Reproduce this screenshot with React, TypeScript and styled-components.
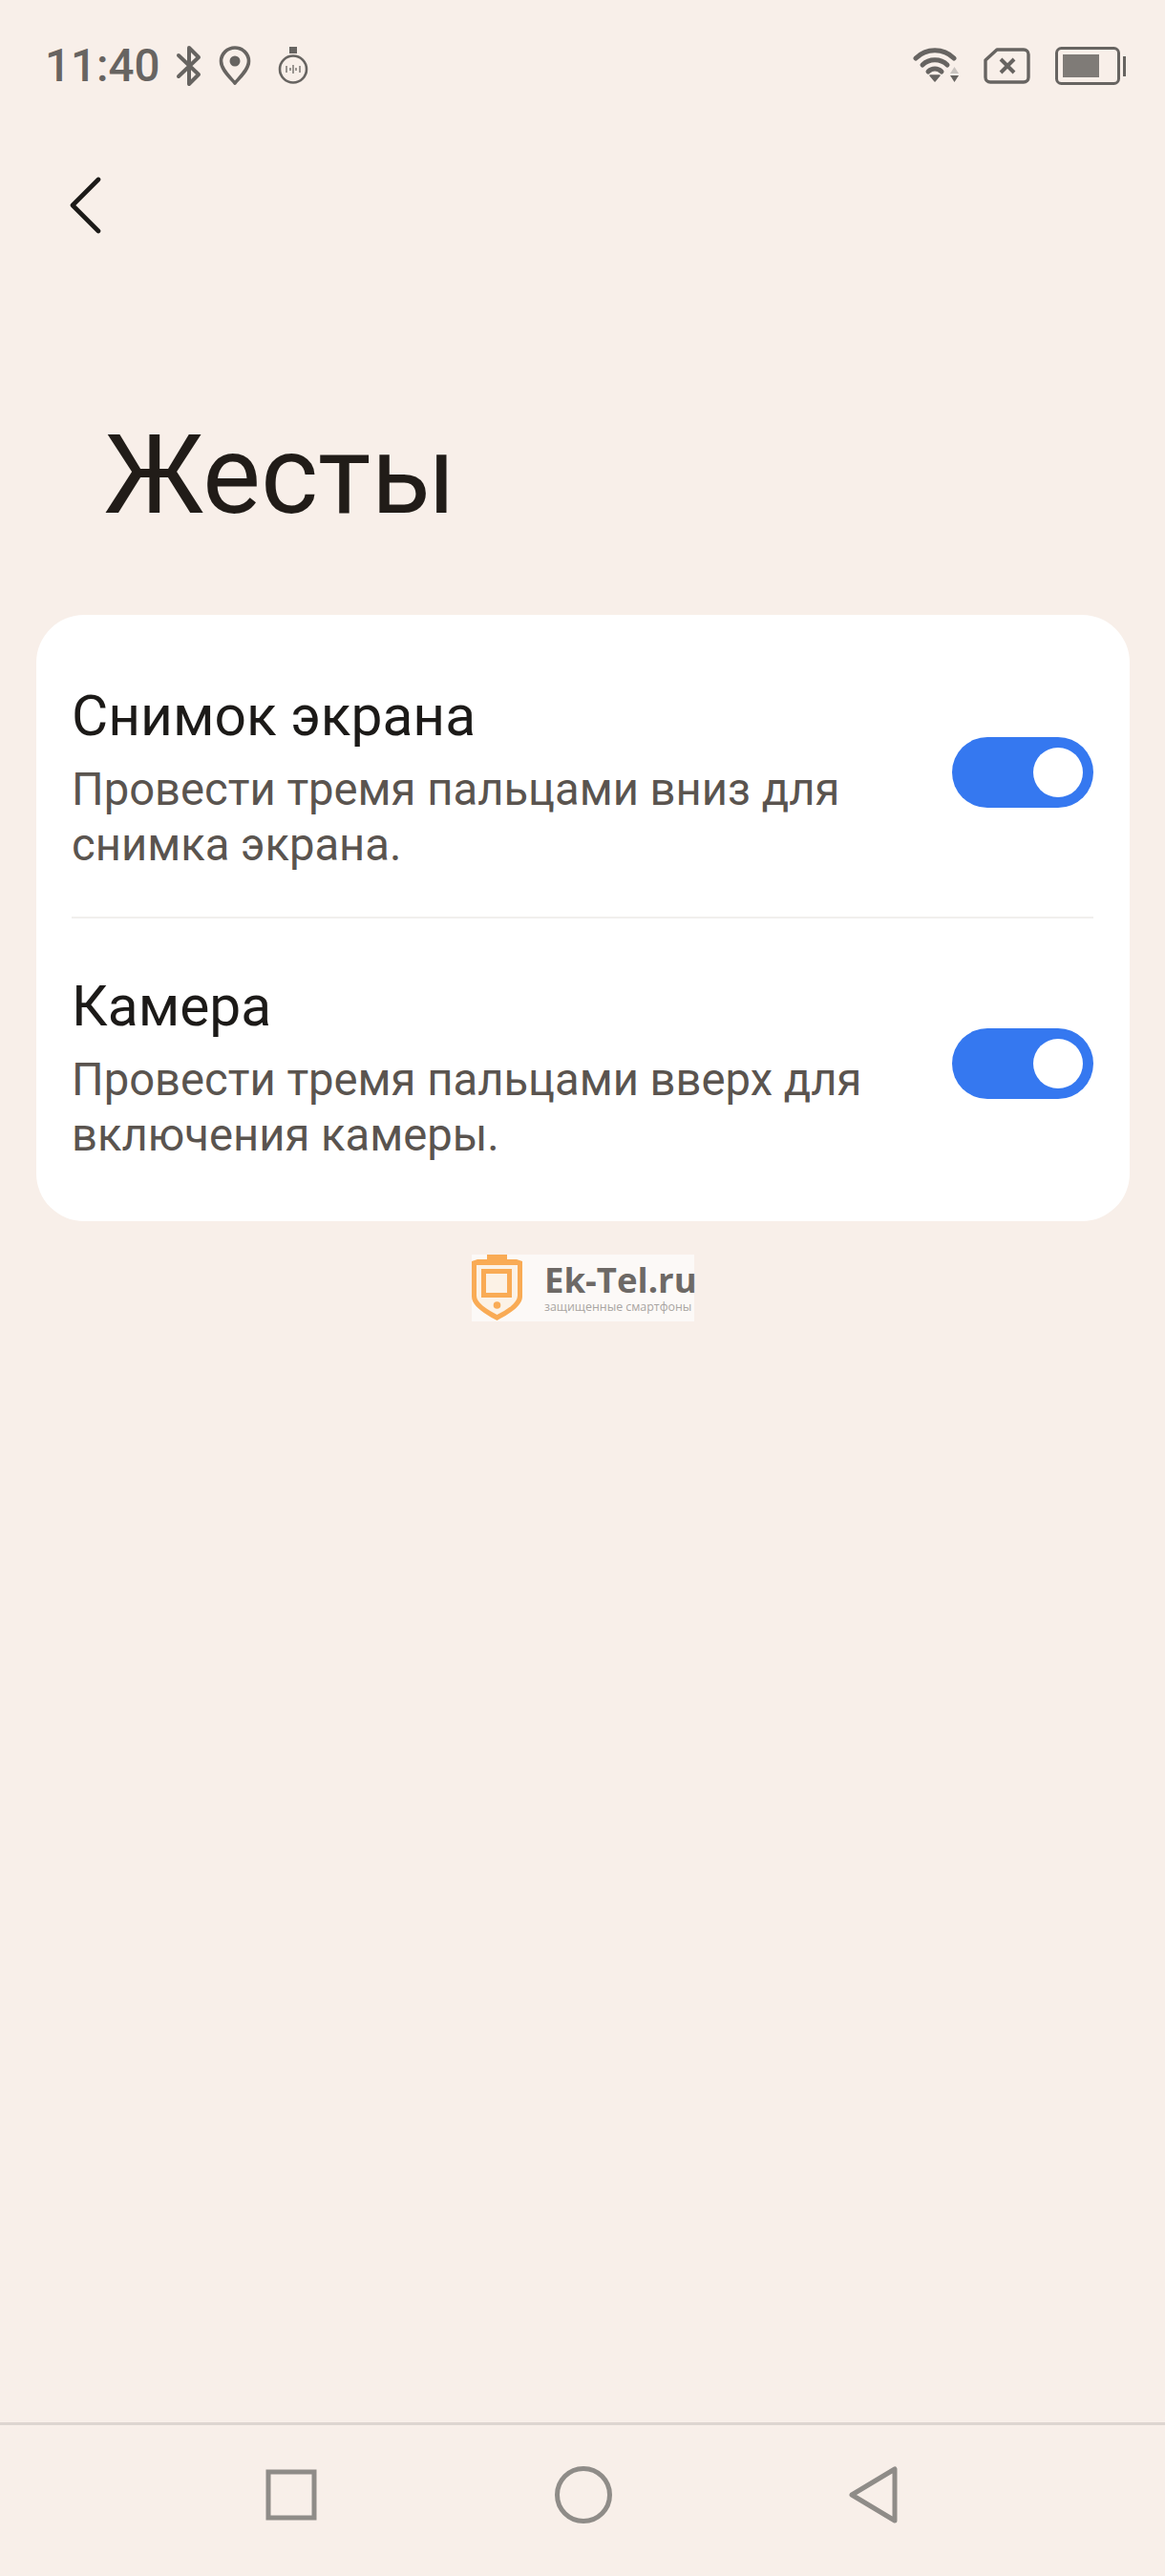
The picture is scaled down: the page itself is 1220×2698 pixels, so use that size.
import React from "react";
import styled, { createGlobalStyle } from "styled-components";

const Global = createGlobalStyle`
  html, body { margin: 0; padding: 0; background: #f8efe9; }
  body { font-family: Roboto, "Noto Sans", sans-serif; }
`;

const Page = styled.div`
  width: 1220px;
  height: 2698px;
  background: #f8efe9;
  display: flex;
  flex-direction: column;
  overflow: hidden;
`;

const StatusBar = styled.header`
  height: 46px;
  margin-top: 46px;
  display: flex;
  align-items: center;
  justify-content: space-between;
  padding: 0 41px 0 47px;
`;

const StatusGroup = styled.div`
  display: flex;
  align-items: center;
`;

const Time = styled.span`
  font-size: 47.500px;
  font-weight: 500;
  line-height: 46px;
  color: #676461;
  margin-right: 16px;
`;

const StatusIcon = styled.svg<{ $gap?: number }>`
  display: block;
  flex: none;
  margin-right: ${(p) => p.$gap ?? 0}px;
  color: #676461;
`;

const BackRow = styled.div`
  margin-top: 93px;
  padding-left: 72px;
  height: 60px;
`;

const Title = styled.h1`
  margin: 187px 0 0;
  padding-left: 109px;
  font-size: 115px;
  line-height: 132px;
  font-weight: 400;
  color: #211c18;
`;

const Card = styled.section`
  margin: 80px 37px 0 38px;
  height: 635px;
  background: #fff;
  border-radius: 50px;
  padding: 0 38px 0 37px;
  display: flex;
  flex-direction: column;
`;

const Row = styled.div`
  height: 304px;
  padding-top: 9px;
  display: flex;
  align-items: center;
  justify-content: space-between;
  box-sizing: border-box;
  &:first-child {
    height: 318px;
    padding-top: 25px;
    border-bottom: 2px solid #f1efed;
  }
`;

const RowText = styled.div`
  width: 880px;
`;

const RowTitle = styled.div`
  font-size: 58.700px;
  line-height: 68px;
  color: #1c1a18;
`;

const RowDesc = styled.div`
  margin-top: 14px;
  font-size: 47.200px;
  line-height: 58px;
  color: #5a544f;
`;

const Switch = styled.div<{ $raise: number }>`
  width: 148px;
  height: 74px;
  flex: none;
  margin-top: ${(p) => -p.$raise}px;
  border-radius: 37px;
  background: #3578f0;
  display: flex;
  align-items: center;
  justify-content: flex-end;
  padding-right: 11px;
  box-sizing: border-box;
`;

const Knob = styled.div`
  width: 52px;
  height: 52px;
  border-radius: 50%;
  background: #fff;
`;

const Logo = styled.div`
  align-self: flex-start;
  margin: 35px 0 0 494px;
  width: 233px;
  height: 70px;
  background: #fcf9f7;
  display: flex;
`;

const LogoMark = styled.svg`
  display: block;
  flex: none;
`;

const LogoText = styled.div`
  margin-left: 22px;
  display: flex;
  flex-direction: column;
  white-space: nowrap;
`;

const LogoName = styled.div`
  font-family: "Open Sans", sans-serif;
  font-weight: 700;
  font-size: 36.500px;
  line-height: 40px;
  margin-top: 6px;
  color: #6d6966;
`;

const LogoSub = styled.div`
  font-family: "Open Sans", sans-serif;
  font-size: 12.400px;
  line-height: 14px;
  margin-top: 2px;
  color: #a9a5a2;
`;

const Spacer = styled.div`
  flex: 1;
`;

const NavBar = styled.nav`
  height: 161px;
  flex: none;
  box-sizing: border-box;
  border-top: 3px solid #ddd5d0;
  display: flex;
  align-items: center;
  justify-content: space-between;
  padding: 0 279px 0 278px;
`;

const NavIcon = styled.svg`
  display: block;
  color: #8f8c88;
  margin-top: -12px;
`;

export default function App() {
  return (
    <Page>
      <Global />
      <StatusBar>
        <StatusGroup>
          <Time>11:40</Time>
          <StatusIcon $gap={17} width="28" height="44" viewBox="0 0 28 44" fill="none" stroke="currentColor" strokeWidth="4" strokeLinejoin="round" strokeLinecap="round">
            <path d="M3 11 L24 31 L14 41 V3 L24 13 L3 33" />
          </StatusIcon>
          <StatusIcon $gap={28} width="34" height="42" viewBox="0 0 34 42" fill="none">
            <path d="M17 39 C12 33 2.500 25 2.500 16 A14.500 14 0 0 1 31.500 16 C31.500 25 22 33 17 39 Z" stroke="currentColor" strokeWidth="3.600" strokeLinejoin="round" />
            <circle cx="17" cy="16" r="5.500" fill="currentColor" />
          </StatusIcon>
          <StatusIcon width="32" height="40" viewBox="0 0 32 40" fill="none">
            <rect x="12" y="0" width="8" height="7" fill="currentColor" />
            <circle cx="16" cy="23.500" r="14" stroke="currentColor" strokeWidth="2.600" />
            <path d="M9 20 V27 M13 22 V25 M16 19 V28 M19 22 V25 M23 20 V27" stroke="currentColor" strokeWidth="1.300" />
          </StatusIcon>
        </StatusGroup>
        <StatusGroup>
          <StatusIcon $gap={22} width="52" height="38" viewBox="0 0 52 38" fill="none">
            <path d="M3 11 C14 0 32 0 43 11" stroke="currentColor" strokeWidth="5" strokeLinecap="round" />
            <path d="M10 18 C17 11 29 11 36 18" stroke="currentColor" strokeWidth="5" strokeLinecap="round" />
            <path d="M16 25 C20 21 26 21 30 25" stroke="currentColor" strokeWidth="5" strokeLinecap="round" />
            <path d="M18 29 H28 L23 35 Z" fill="currentColor" stroke="currentColor" strokeWidth="1.500" strokeLinejoin="round" />
            <path d="M39 27 L43.500 20 L48 27 Z" fill="#c9c4c0" />
            <path d="M39 29 H48 L43.500 36 Z" fill="currentColor" />
          </StatusIcon>
          <StatusIcon $gap={26} width="49" height="38" viewBox="0 0 49 38" fill="none">
            <path d="M14 2 H42 A5 5 0 0 1 47 7 V31 A5 5 0 0 1 42 36 H7 A5 5 0 0 1 2 31 V13 Z" stroke="currentColor" strokeWidth="3.400" strokeLinejoin="round" />
            <path d="M18 12 L32 26 M32 12 L18 26" stroke="currentColor" strokeWidth="4" />
          </StatusIcon>
          <StatusIcon width="74" height="40" viewBox="0 0 74 40" fill="none">
            <rect x="1.500" y="1.500" width="65" height="37" rx="5" stroke="currentColor" strokeWidth="3" />
            <rect x="8" y="8" width="38" height="24" fill="#7f7b77" />
            <rect x="71" y="10" width="3" height="21" fill="currentColor" />
          </StatusIcon>
        </StatusGroup>
      </StatusBar>
      <BackRow>
        <svg width="36" height="60" viewBox="0 0 36 60" fill="none" stroke="#1c1a18" strokeWidth="4.600" strokeLinecap="round" strokeLinejoin="round">
          <path d="M31 3 L4 30 L31 57" />
        </svg>
      </BackRow>
      <Title>Жесты</Title>
      <Card>
        <Row>
          <RowText>
            <RowTitle>Снимок экрана</RowTitle>
            <RowDesc>Провести тремя пальцами вниз для снимка экрана.</RowDesc>
          </RowText>
          <Switch $raise={11}><Knob /></Switch>
        </Row>
        <Row>
          <RowText>
            <RowTitle>Камера</RowTitle>
            <RowDesc>Провести тремя пальцами вверх для включения камеры.</RowDesc>
          </RowText>
          <Switch $raise={9}><Knob /></Switch>
        </Row>
      </Card>
      <Logo>
        <LogoMark width="54" height="70" viewBox="0 0 54 70" fill="none">
          <path d="M0 7 L6 5 H16 V0 H37 V5 H47 L53 7 V44 C53 54 38 63 26.500 69 C15 63 0 54 0 44 Z" fill="#f9ab55" />
          <path d="M5 11 H48 V43 C48 51 36 58 26.500 63 C17 58 5 51 5 43 Z" fill="#fcf2e6" />
          <rect x="10" y="15" width="32" height="30" fill="#f9ab55" />
          <rect x="15" y="20" width="22" height="20" fill="#fcf2e6" />
          <circle cx="26.500" cy="53" r="3.800" fill="#f9ab55" />
        </LogoMark>
        <LogoText>
          <LogoName>Ek-Tel.ru</LogoName>
          <LogoSub>защищенные смартфоны</LogoSub>
        </LogoText>
      </Logo>
      <Spacer />
      <NavBar>
        <NavIcon width="54" height="54" viewBox="0 0 54 54" fill="none">
          <rect x="3" y="3" width="48" height="48" stroke="currentColor" strokeWidth="5" />
        </NavIcon>
        <NavIcon width="60" height="60" viewBox="0 0 60 60" fill="none">
          <circle cx="30" cy="30" r="27.500" stroke="currentColor" strokeWidth="5" />
        </NavIcon>
        <NavIcon width="52" height="60" viewBox="0 0 52 60" fill="none">
          <path d="M48 3 V57 L3 30 Z" stroke="currentColor" strokeWidth="5" strokeLinejoin="round" />
        </NavIcon>
      </NavBar>
    </Page>
  );
}
